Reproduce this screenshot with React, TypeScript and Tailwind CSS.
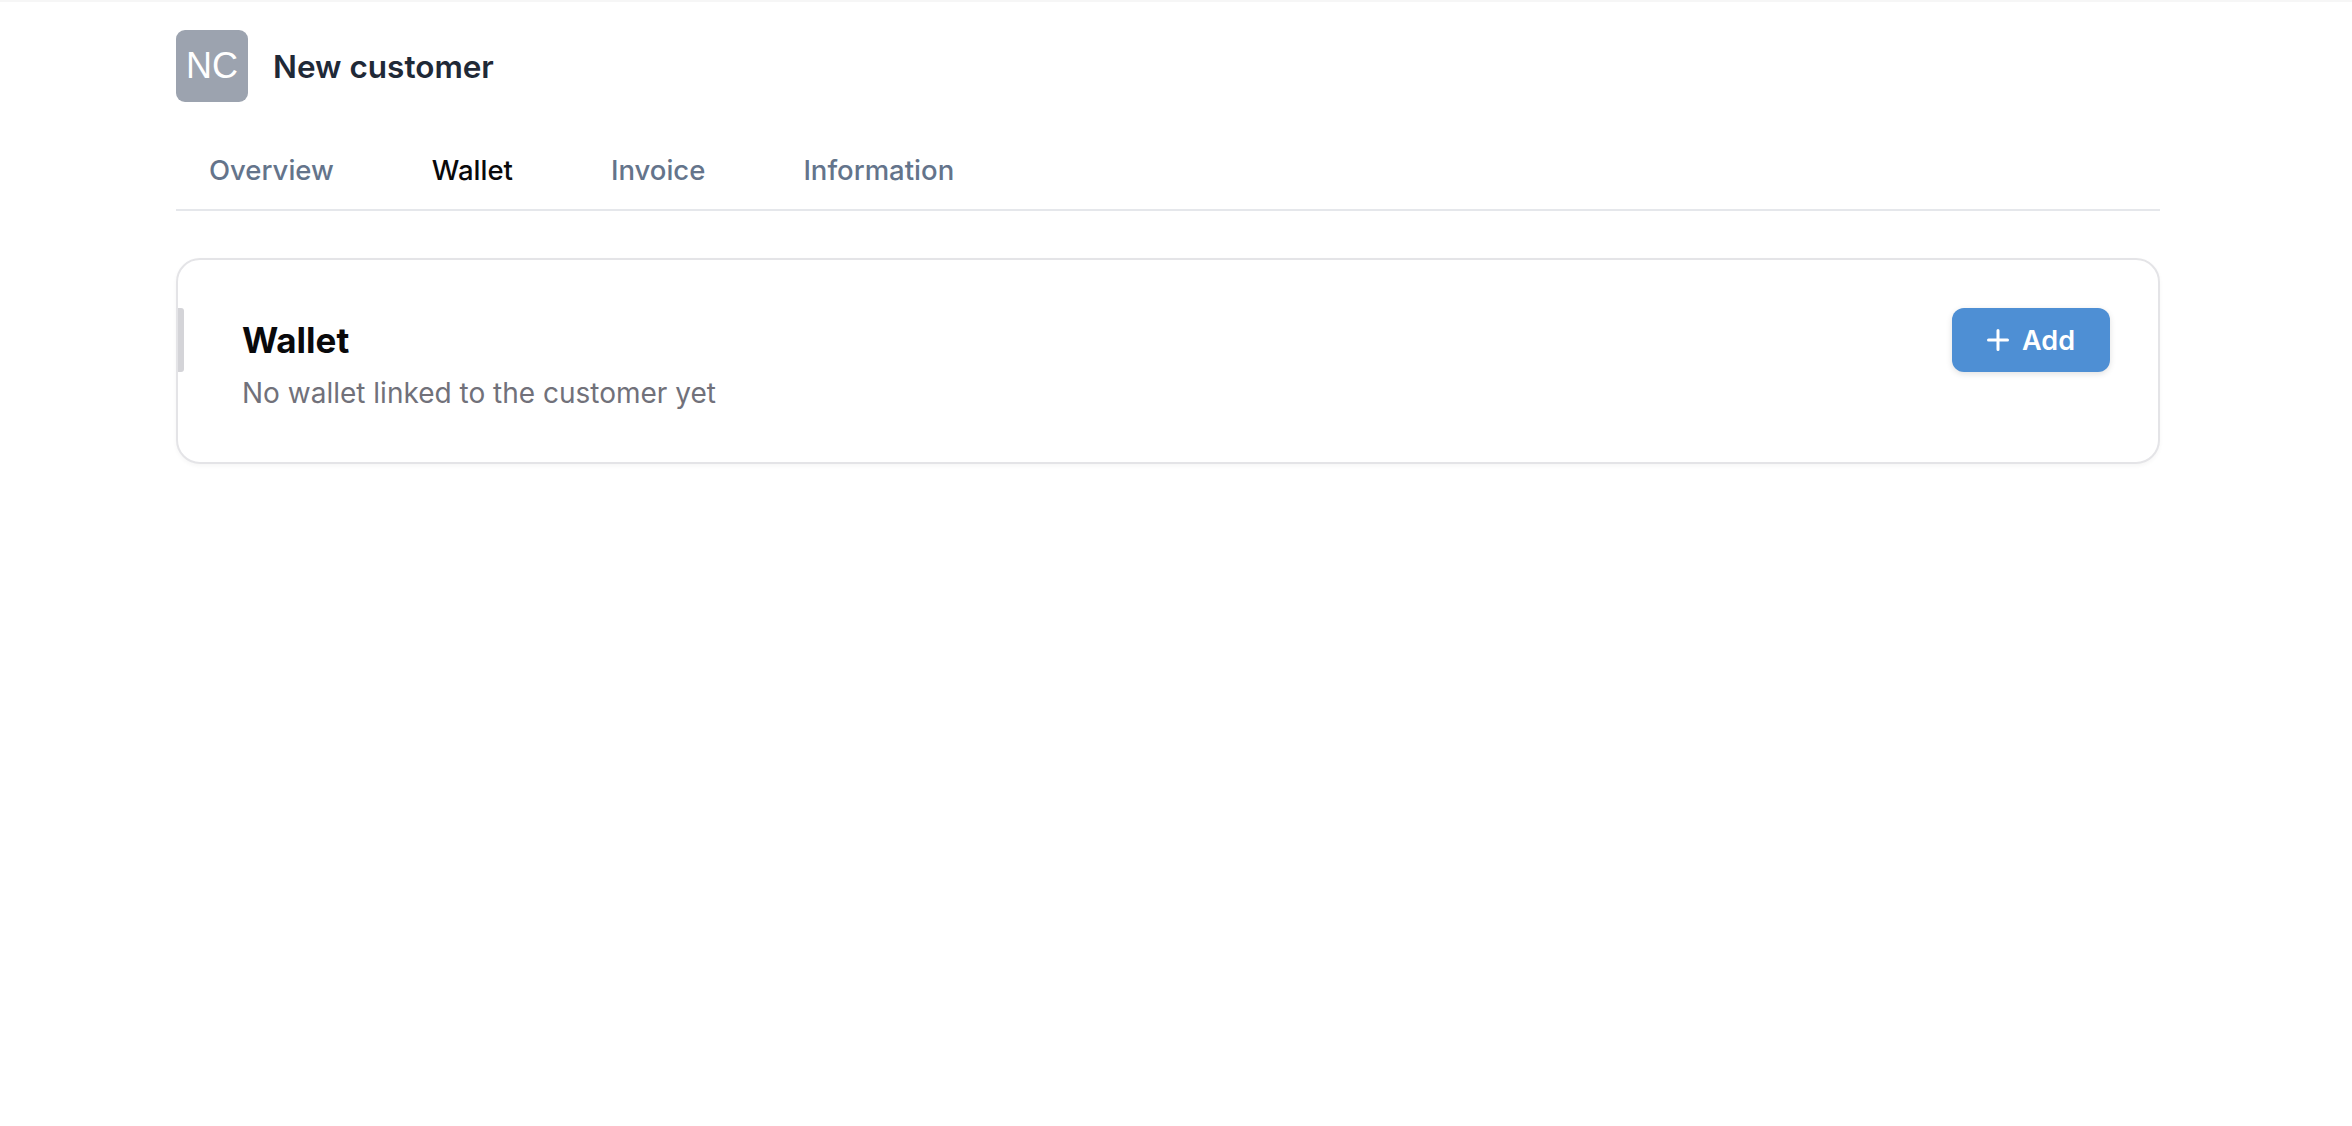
import React from "react";

function PlusIcon() {
  return (
    <svg width="22" height="22" viewBox="0 0 22 22" fill="none" stroke="white" strokeWidth="3" strokeLinecap="round">
      <path d="M11 1.5v19M1.5 11h19" />
    </svg>
  );
}

export default function App() {
  const tabs = ["Overview", "Wallet", "Invoice", "Information"];
  return (
    <div
      className="min-h-screen bg-white border-t-2 border-[#f6f6f6] pl-[176px] pr-[192px] pt-[28px]"
      style={{ fontFamily: "Inter, 'Noto Sans', sans-serif" }}
    >
      <div className="flex items-center gap-[25px]">
        <div
          className="w-[72px] h-[72px] rounded-[9px] bg-[#9ca3af] text-white flex items-center justify-center text-[36px] leading-none"
          style={{ fontFamily: "'Liberation Sans', Arial, sans-serif" }}
        >
          NC
        </div>
        <h1 className="text-[31.5px] font-semibold text-[#1f2937] leading-[45px]">New customer</h1>
      </div>

      <nav className="mt-[48px] flex gap-[32px] border-b-2 border-[#e5e7eb]">
        {tabs.map((t) => (
          <div
            key={t}
            className={
              "px-[33px] pb-[19px] text-[27.5px] leading-[40px] font-medium " +
              (t === "Wallet" ? "text-[#09090b]" : "text-[#64748b]")
            }
          >
            {t}
          </div>
        ))}
      </nav>

      <div className="relative mt-[47px] rounded-[24px] border-2 border-[#e4e4e7] bg-white shadow-[0_2px_4px_rgba(0,0,0,0.04)] pl-[64px] pr-[48px] py-[48px]">
        <div className="absolute left-0 top-[48px] w-[6px] h-[64px] rounded-r-[3px] bg-[#d4d4d8]" />
        <div className="flex items-center justify-between h-[64px]">
          <h2 className="text-[35px] font-bold text-[#09090b] leading-[52px]">Wallet</h2>
          <button className="h-[64px] px-[35px] flex items-center gap-[13px] rounded-[12px] bg-[#4e8fd4] text-white text-[27px] font-semibold leading-none shadow-[0_2px_6px_rgba(0,0,0,0.12)]">
            <PlusIcon />
            <span>Add</span>
          </button>
        </div>
        <p className="text-[28px] leading-[42px] text-[#71717a]">No wallet linked to the customer yet</p>
      </div>
    </div>
  );
}
